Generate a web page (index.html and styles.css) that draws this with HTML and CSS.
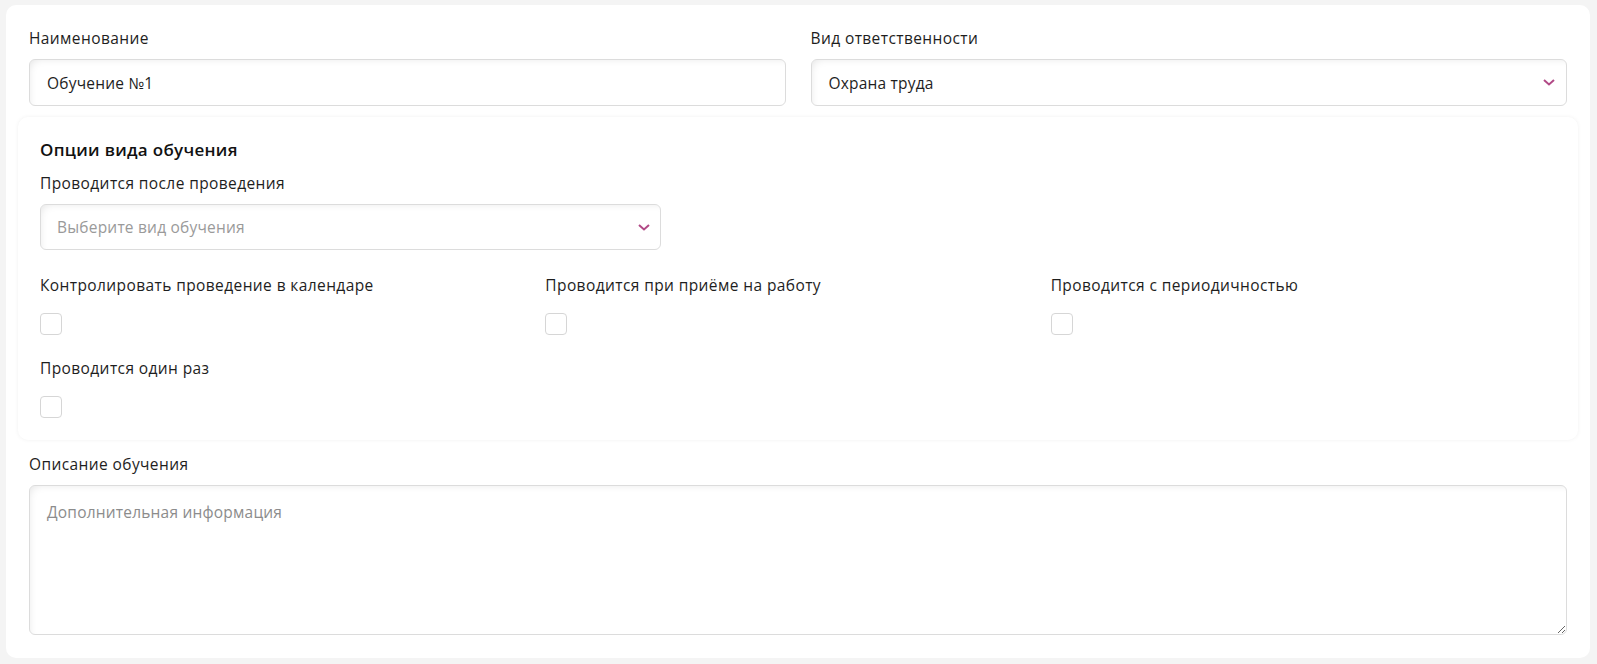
FILE: index.html
```html
<!DOCTYPE html>
<html lang="ru">
<head>
  <meta charset="UTF-8">
  <meta name="viewport" content="width=device-width, initial-scale=1.0">
  <title>Обучение</title>
  <link rel="stylesheet" href="styles.css">
</head>
<body>
  <div class="card">
    <div class="row">
      <div class="field">
        <label class="label" for="name">Наименование</label>
        <input class="input" type="text" id="name" value="Обучение №1">
      </div>
      <div class="field">
        <label class="label">Вид ответственности</label>
        <div class="select">
          <span class="select-value">Охрана труда</span>
          <svg class="chevron" width="12" height="7" viewBox="0 0 12 7"><path d="M1 1l5 4.5L11 1" fill="none" stroke="#b14a86" stroke-width="2"/></svg>
        </div>
      </div>
    </div>

    <div class="options">
      <h3 class="options-title">Опции вида обучения</h3>
      <label class="label">Проводится после проведения</label>
      <div class="select select-small">
        <span class="select-placeholder">Выберите вид обучения</span>
        <svg class="chevron" width="12" height="7" viewBox="0 0 12 7"><path d="M1 1l5 4.5L11 1" fill="none" stroke="#b14a86" stroke-width="2"/></svg>
      </div>

      <div class="checks">
        <div class="check-item">
          <div class="label">Контролировать проведение в календаре</div>
          <span class="checkbox"></span>
        </div>
        <div class="check-item">
          <div class="label">Проводится при приёме на работу</div>
          <span class="checkbox"></span>
        </div>
        <div class="check-item">
          <div class="label">Проводится с периодичностью</div>
          <span class="checkbox"></span>
        </div>
        <div class="check-item">
          <div class="label">Проводится один раз</div>
          <span class="checkbox"></span>
        </div>
      </div>
    </div>

    <div class="field">
      <label class="label" for="descr">Описание обучения</label>
      <textarea class="textarea" id="descr" placeholder="Дополнительная информация"></textarea>
    </div>
  </div>
</body>
</html>
```

FILE: styles.css
```css
* {
  box-sizing: border-box;
}
body {
  margin: 0;
  padding: 5px 7px 6px 6px;
  background-color: #f4f4f4;
  font-family: 'Open Sans', 'Noto Sans', sans-serif;
  font-size: 16px;
  color: #222;
}
.card {
  background-color: #fff;
  border-radius: 10px;
  padding: 23px 23px 23px 23px;
}
.row {
  display: flex;
  gap: 25px;
}
.row .field {
  flex: 1;
}
.label {
  display: block;
  font-size: 15.5px;
  line-height: 20px;
  letter-spacing: 0.4px;
  color: #1e1e1e;
  margin-bottom: 11px;
}
.input, .select, .textarea {
  width: 100%;
  border: 1px solid #dcdcdc;
  border-radius: 6px;
  background-color: #fff;
  box-shadow: inset 6px 6px 10px -8px rgba(0, 0, 0, 0.12);
  font-family: inherit;
  font-size: 15.5px;
  letter-spacing: 0.2px;
  color: #1e1e1e;
}
.input {
  height: 47px;
  padding: 0 17px;
  outline: none;
}
.select {
  height: 47px;
  padding: 0 11px 0 17px;
  display: flex;
  align-items: center;
  justify-content: space-between;
}
.select-small {
  width: 621px;
  height: 46px;
  padding: 0 10px 0 16px;
  margin-bottom: 25px;
}
.select-placeholder {
  color: #9a9a9a;
}
.options {
  margin: 11px -11px 14px;
  padding: 22px 22px 22px;
  border-radius: 10px;
  background-color: #fff;
  box-shadow: 0 0 4px rgba(0, 0, 0, 0.06);
}
.options-title {
  margin: 0 0 12px;
  font-size: 17px;
  line-height: 22px;
  font-weight: 600;
  letter-spacing: 0.3px;
  color: #111;
}
.checks {
  display: grid;
  grid-template-columns: repeat(3, 1fr);
  row-gap: 23px;
}
.check-item .label {
  margin-bottom: 18px;
}
.checkbox {
  display: block;
  width: 22px;
  height: 22px;
  border: 1px solid #d6d6d6;
  border-radius: 4px;
}
.textarea {
  display: block;
  height: 150px;
  padding: 15px 17px;
  resize: vertical;
  outline: none;
}
.textarea::placeholder {
  color: #8c8c8c;
}
```
